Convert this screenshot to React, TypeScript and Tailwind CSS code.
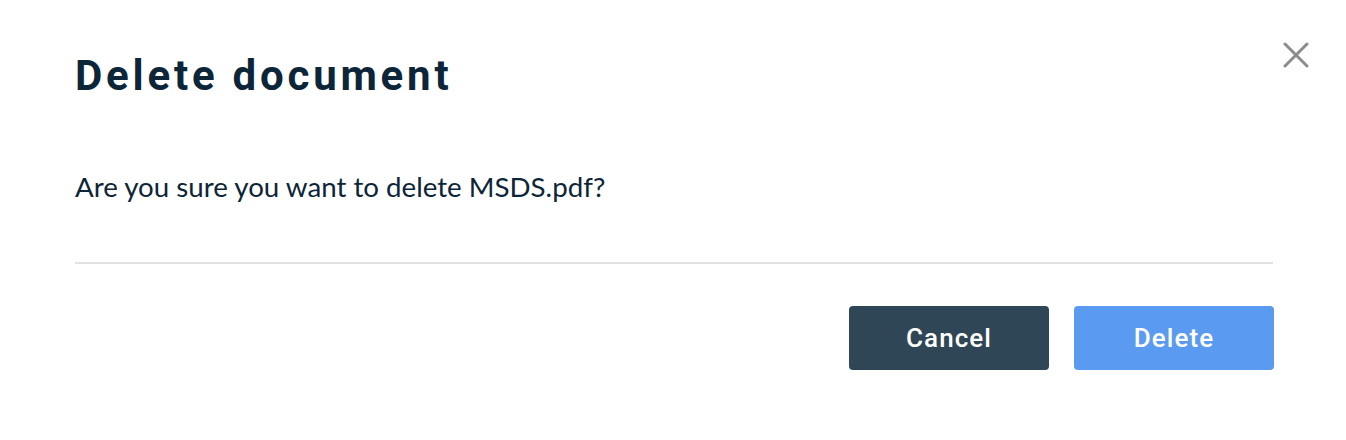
import React from 'react';

const CloseIcon: React.FC = () => (
  <svg width="26" height="26" viewBox="0 0 26 26" fill="none" stroke="#8c8c8c" strokeWidth="3" strokeLinecap="round">
    <path d="M2 2 L24 24 M24 2 L2 24" />
  </svg>
);

const App: React.FC = () => {
  return (
    <div className="w-[1346px] h-[440px] bg-white relative">
      <button className="absolute left-[1283px] top-[42px]" aria-label="Close">
        <CloseIcon />
      </button>

      <div className="pl-[75px] pr-[72px] pt-[52px]">
        <h1
          className="text-[42px] leading-[48px] font-bold text-[#0d2538] tracking-[0.09em]"
          style={{ fontFamily: 'Roboto, "Liberation Sans", sans-serif' }}
        >
          Delete document
        </h1>

        <p
          className="mt-[70px] text-[27.7px] leading-[34px] text-[#0d2538]"
          style={{ fontFamily: 'Lato, "Liberation Sans", sans-serif' }}
        >
          Are you sure you want to delete MSDS.pdf?
        </p>

        <div className="mt-[58px] mr-[1px] h-[2px] bg-[#e2e2e2]" />

        <div
          className="mt-[42px] flex justify-end gap-[25px]"
          style={{ fontFamily: 'Roboto, "Liberation Sans", sans-serif' }}
        >
          <button className="w-[200px] h-[64px] rounded-[4px] bg-[#2f4657] text-white text-[26px] font-medium tracking-[0.04em]">
            Cancel
          </button>
          <button className="w-[200px] h-[64px] rounded-[4px] bg-[#5a9af0] text-white text-[26px] font-medium tracking-[0.04em]">
            Delete
          </button>
        </div>
      </div>
    </div>
  );
};

export default App;
